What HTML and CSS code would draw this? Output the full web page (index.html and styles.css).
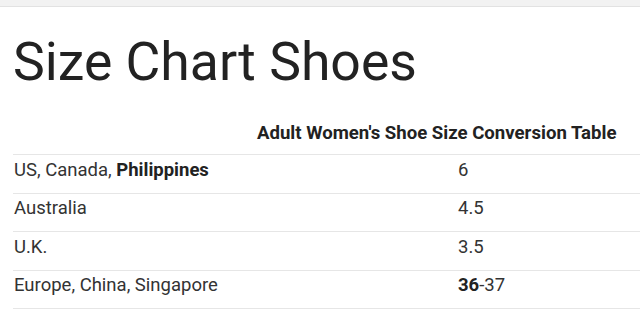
FILE: index.html
```html
<!DOCTYPE html>
<html>
<head>
<meta charset="utf-8">
<link rel="stylesheet" href="styles.css">
</head>
<body>
<div class="topbar"></div>
<h1 class="title">Size Chart Shoes</h1>
<table class="chart">
  <thead>
    <tr><th colspan="2" class="head">Adult Women's Shoe Size Conversion Table</th></tr>
  </thead>
  <tbody>
    <tr><td class="c1">US, Canada, <b>Philippines</b></td><td class="c2">6</td></tr>
    <tr><td class="c1">Australia</td><td class="c2">4.5</td></tr>
    <tr><td class="c1">U.K.</td><td class="c2">3.5</td></tr>
    <tr><td class="c1">Europe, China, Singapore</td><td class="c2"><b>36</b>-37</td></tr>
  </tbody>
</table>
</body>
</html>
```
FILE: styles.css
```css
html, body {
  margin: 0;
  padding: 0;
  background: #fff;
  font-family: Roboto, "Noto Sans", sans-serif;
  color: #333;
  overflow: hidden;
}
.topbar {
  height: 6px;
  background: #f2f2f2;
  border-bottom: 1px solid #e2e2e2;
}
.title {
  margin: 28px 0 0 13px;
  font-size: 53.5px;
  line-height: 54px;
  font-weight: 400;
  color: #222;
}
.chart {
  margin: 30px 0 0 13px;
  border-collapse: collapse;
  width: 640px;
}
.head {
  text-align: left;
  padding: 3.5px 0 11.5px 244px;
  font-size: 18.6px;
  font-weight: 700;
  line-height: 20px;
  height: 20px;
  vertical-align: top;
  color: #222;
  border-bottom: 1px solid #e6e6e6;
}
.chart td {
  font-size: 18.5px;
  line-height: 20px;
  padding: 4.5px 0 13px 1px;
  vertical-align: top;
  border-bottom: 1px solid #e6e6e6;
}
.c1 { width: 443px; }
.chart b { font-weight: 700; color: #222; }
```
